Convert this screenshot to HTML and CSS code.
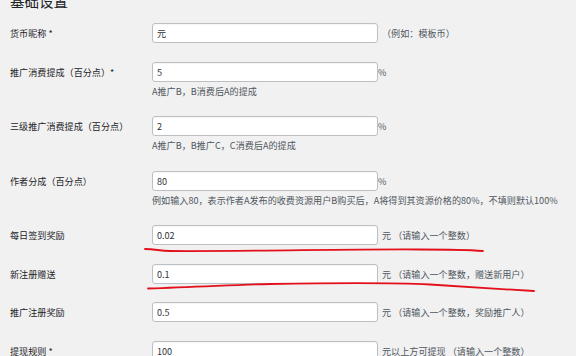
FILE: index.html
```html
<!DOCTYPE html>
<html lang="zh-CN">
<head>
<meta charset="utf-8">
<title>基础设置</title>
<link rel="stylesheet" href="styles.css">
</head>
<body>
<div class="page">
  <h2 class="title">基础设置</h2>
  <div class="form">
    <div class="row">
      <div class="label">货币昵称 *</div>
      <div class="field">
        <div class="line"><input class="text" type="text" value="元" readonly><span class="suffix">（例如：模板币）</span></div>
      </div>
    </div>
    <div class="row">
      <div class="label">推广消费提成（百分点）*</div>
      <div class="field">
        <div class="line"><input class="text" type="text" value="5" readonly><span class="unit">%</span></div>
        <p class="desc">A推广B，B消费后A的提成</p>
      </div>
    </div>
    <div class="row">
      <div class="label">三级推广消费提成（百分点）</div>
      <div class="field">
        <div class="line"><input class="text" type="text" value="2" readonly><span class="unit">%</span></div>
        <p class="desc">A推广B，B推广C，C消费后A的提成</p>
      </div>
    </div>
    <div class="row">
      <div class="label">作者分成（百分点）</div>
      <div class="field">
        <div class="line"><input class="text" type="text" value="80" readonly><span class="unit">%</span></div>
        <p class="desc">例如输入80，表示作者A发布的收费资源用户B购买后，A将得到其资源价格的80%，不填则默认100%</p>
      </div>
    </div>
    <div class="row">
      <div class="label">每日签到奖励</div>
      <div class="field">
        <div class="line"><input class="text" type="text" value="0.02" readonly><span class="suffix">元 （请输入一个整数）</span></div>
      </div>
    </div>
    <div class="row">
      <div class="label">新注册赠送</div>
      <div class="field">
        <div class="line"><input class="text" type="text" value="0.1" readonly><span class="suffix">元 （请输入一个整数，赠送新用户）</span></div>
      </div>
    </div>
    <div class="row">
      <div class="label">推广注册奖励</div>
      <div class="field">
        <div class="line"><input class="text" type="text" value="0.5" readonly><span class="suffix">元 （请输入一个整数，奖励推广人）</span></div>
      </div>
    </div>
    <div class="row">
      <div class="label">提现规则 *</div>
      <div class="field">
        <div class="line"><input class="text" type="text" value="100" readonly><span class="suffix">元以上方可提现 （请输入一个整数）</span></div>
      </div>
    </div>
  </div>
  <svg class="marks" width="576" height="356" viewBox="0 0 576 356" aria-hidden="true">
    <path d="M145 249 C 155 249, 160 251, 170 251 C 250 251.5, 350 249, 420 249.5 C 450 249.5, 470 250, 483 251" />
    <path d="M148 288.5 C 200 287, 240 284.5, 270 284 C 330 283, 400 283, 430 284.5 C 470 287, 500 289, 534 291" />
  </svg>
</div>
</body>
</html>
```

FILE: styles.css
```css
* {
  box-sizing: border-box;
}

html, body {
  margin: 0;
  background: #f1f1f1;
}

body {
  font-family: "Noto Sans CJK SC", "Noto Sans", sans-serif;
  font-size: 9.1px;
  color: #3c434a;
  overflow: hidden;
}

.page {
  position: relative;
  width: 576px;
  height: 356px;
  padding-left: 10px;
  overflow: hidden;
}

.title {
  margin: -7px 0 0;
  height: 15px;
  font-size: 14.5px;
  line-height: 15px;
  font-weight: normal;
  color: #1d2327;
}

.form {
  display: flex;
  flex-direction: column;
  gap: 18.5px;
  padding-top: 15px;
}

.row {
  display: grid;
  grid-template-columns: 142px auto;
  align-items: start;
}

.label {
  height: 20px;
  line-height: 20px;
  color: #1d2327;
  white-space: nowrap;
}

.field {
  display: flex;
  flex-direction: column;
}

.line {
  display: flex;
  align-items: center;
  height: 20px;
}

.text {
  width: 226px;
  height: 20px;
  margin: 0;
  padding: 0 4px;
  border: 1px solid #bcc0c4;
  border-radius: 3px;
  background: #fff;
  box-shadow: inset 0 1px 1px rgba(0, 0, 0, 0.04);
  font-family: "Noto Sans CJK SC", "Noto Sans", sans-serif;
  font-size: 9.1px;
  color: #2c3338;
  outline: none;
}

.unit {
  color: #50575e;
  line-height: 20px;
}

.suffix {
  margin-left: 4px;
  color: #50575e;
  line-height: 20px;
  white-space: nowrap;
}

.desc {
  margin: 3px 0 0;
  height: 13px;
  line-height: 13px;
  color: #50575e;
  white-space: nowrap;
}

.marks {
  position: absolute;
  left: 0;
  top: 0;
  pointer-events: none;
}

.marks path {
  fill: none;
  stroke: #e3101c;
  stroke-width: 1.8;
  stroke-linecap: round;
}
```
